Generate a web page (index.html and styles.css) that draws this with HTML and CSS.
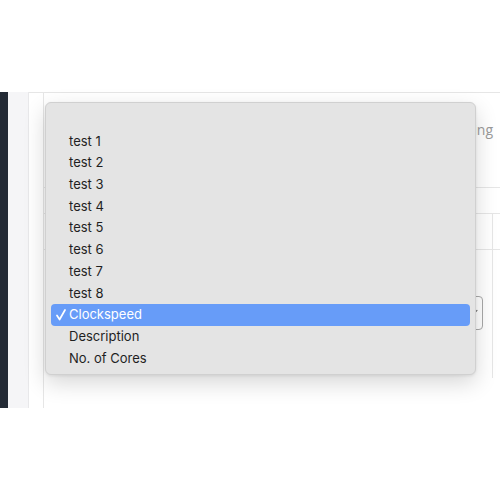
FILE: index.html
```html
<!DOCTYPE html>
<html lang="en">
<head>
    <meta charset="UTF-8">
    <meta name="viewport" content="width=device-width, initial-scale=1.0">
    <title>Field Select</title>
    <link rel="stylesheet" href="styles.css">
</head>
<body>

<div class="app">
    <div class="sidebar"></div>
    <div class="gutter"></div>
    <div class="main">
        <div class="card">
            <div class="card-head">
                <span class="hint">Sorting</span>
            </div>
            <div class="table">
                <div class="thead"></div>
                <div class="row first"><div class="cell"></div><div class="edge"></div></div>
                <div class="row second">
                    <div class="cell">
                        <div class="select"><span class="chev"></span></div>
                    </div>
                    <div class="edge"></div>
                </div>
            </div>
        </div>
    </div>
</div>

<div class="menu">
    <div class="option empty"></div>
    <div class="option">test 1</div>
    <div class="option">test 2</div>
    <div class="option">test 3</div>
    <div class="option">test 4</div>
    <div class="option">test 5</div>
    <div class="option">test 6</div>
    <div class="option">test 7</div>
    <div class="option">test 8</div>
    <div class="option selected">
        <svg class="check" width="10" height="12" viewBox="0 0 10 12">
            <polyline points="1,6.5 3.6,10.5 9,1" fill="none" stroke="#fff" stroke-width="1.7" stroke-linecap="round" stroke-linejoin="round"/>
        </svg>Clockspeed
    </div>
    <div class="option">Description</div>
    <div class="option">No. of Cores</div>
</div>

</body>
</html>
```

FILE: styles.css
```css
body {
    margin: 0;
    background: #fff;
    font-family: Inter, "Noto Sans", sans-serif;
    width: 500px;
    height: 500px;
    overflow: hidden;
}

.app {
    margin-top: 92px;
    height: 316px;
    display: flex;
}

.sidebar {
    width: 8px;
    background: #232a35;
}

.gutter {
    width: 20px;
    background: #f5f5f7;
    border-right: 1px solid #e8e8ea;
}

.main {
    flex: 1;
    border-top: 1px solid #e6e6e6;
    padding-left: 14px;
    display: flex;
}

.card {
    flex: 1;
    border-left: 1px solid #e6e6e6;
    display: flex;
    flex-direction: column;
}

.card-head {
    height: 94px;
    display: flex;
    justify-content: flex-end;
    align-items: flex-start;
    padding-right: 7px;
}

.hint {
    margin-top: 27px;
    font-family: "Open Sans", sans-serif;
    font-size: 14px;
    color: #9a9a9a;
}

.table {
    border-top: 1px solid #e6e6e6;
    flex: 1;
    display: flex;
    flex-direction: column;
}

.thead {
    height: 25px;
    border-bottom: 1px solid #e6e6e6;
}

.row {
    display: flex;
}

.row.first {
    height: 35px;
    border-bottom: 1px solid #e6e6e6;
}

.row.second {
    height: 128px;
}

.cell {
    flex: 1;
    display: flex;
    justify-content: flex-end;
    padding-right: 9px;
}

.edge {
    width: 7px;
    border-left: 1px solid #e6e6e6;
}

.select {
    margin-top: 46px;
    width: 60px;
    height: 32px;
    border: 1px solid #a9a9a9;
    border-radius: 4px;
    position: relative;
}

.chev {
    position: absolute;
    right: 4px;
    top: 14px;
    width: 4px;
    height: 1px;
    background: #555;
    transform: rotate(-50deg);
}

.menu {
    position: absolute;
    left: 45px;
    top: 102px;
    width: 431px;
    box-sizing: border-box;
    padding: 6px 5px 5px;
    background: #e4e4e4;
    border: 1px solid #d0d0d0;
    border-radius: 6px;
    box-shadow: 0 8px 22px rgba(0, 0, 0, 0.16), 0 1px 3px rgba(0, 0, 0, 0.08);
}

.option {
    height: 21.7px;
    line-height: 21.7px;
    padding-left: 18px;
    font-size: 13px;
    color: #1f1f1f;
    border-radius: 4px;
    position: relative;
}

.option.selected {
    background: #679cf8;
    color: #fff;
}

.check {
    position: absolute;
    left: 5px;
    top: 5px;
}
```
